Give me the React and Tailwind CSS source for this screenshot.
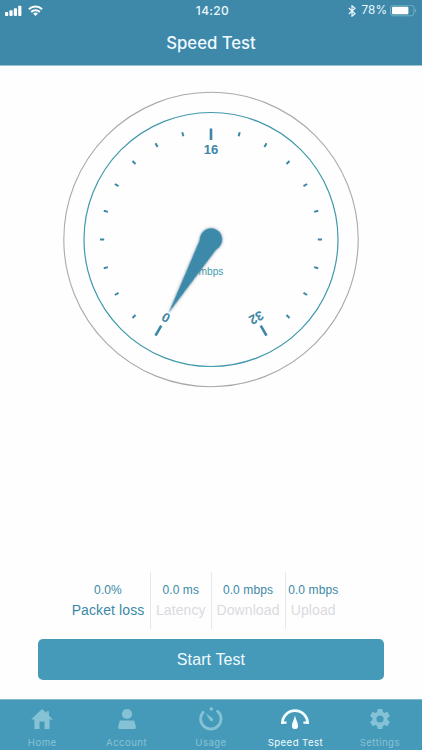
const TICKS = Array.from({ length: 21 }, (_, i) => -150 + i * 15);
const LABELS = { '-150': '0', 0: '16', 150: '32' };

const STATS = [
  { value: '0.0%', label: 'Packet loss', active: true, width: 'w-[85px]' },
  { value: '0.0 ms', label: 'Latency', width: 'w-[60.5px]' },
  { value: '0.0 mbps', label: 'Download', width: 'w-[74px]' },
  { value: '0.0 mbps', label: 'Upload', width: 'w-[55.5px]' },
];

function SignalIcon() {
  return (
    <svg className="h-[12px] w-[17px]" viewBox="0 0 17 12" fill="#fff">
      <rect x="0" y="7" width="3.2" height="4" rx=".9" />
      <rect x="4.4" y="5.3" width="3.2" height="5.7" rx=".9" />
      <rect x="8.8" y="3.2" width="3.2" height="7.8" rx=".9" />
      <rect x="13.2" y=".7" width="3.2" height="10.3" rx=".9" />
    </svg>
  );
}

function WifiIcon() {
  return (
    <svg className="h-[12px] w-[15px]" viewBox="0 0 15 12" fill="none" stroke="#fff" strokeWidth="2.1">
      <path d="M.9 4.2a9.4 9.4 0 0 1 13.2 0" />
      <path d="M3.2 7a6 6 0 0 1 8.6 0" />
      <path d="M5.1 8.6a3.4 3.4 0 0 1 4.8 0L7.5 11.1Z" fill="#fff" stroke="none" />
    </svg>
  );
}

function BluetoothIcon() {
  return (
    <svg className="h-[12px] w-[8px]" viewBox="0 0 8 12" fill="none" stroke="#eaf8fc" strokeWidth="1.2">
      <path d="M.8 3 7 8.7 4 11.2V.8l3 2.5L.8 9" />
    </svg>
  );
}

function BatteryIcon() {
  return (
    <svg className="h-[12px] w-[27px]" viewBox="0 0 27 12">
      <rect x=".5" y=".2" width="23.4" height="10.6" rx="2.6" fill="none" stroke="#70b0c5" />
      <rect x="2" y="1.7" width="16.4" height="7.6" rx="1" fill="#fff" />
      <path d="M25 3.7c1.6.5 1.6 3.1 0 3.6Z" fill="#70b0c5" />
    </svg>
  );
}

function StatusBar() {
  return (
    <div className="grid h-[21px] grid-cols-3 items-center pl-[5px] pr-[5px] text-[#eaf8fc]">
      <div className="flex items-center gap-[6px]">
        <SignalIcon />
        <WifiIcon />
      </div>
      <div className="pl-[3px] text-center text-[12px] font-medium tracking-[0.35px]">14:20</div>
      <div className="flex items-center justify-end">
        <BluetoothIcon />
        <span className="ml-[6px] mr-[3px] text-[11.8px]">78%</span>
        <BatteryIcon />
      </div>
    </div>
  );
}

function Gauge() {
  return (
    <svg className="h-[300px] w-[300px]" viewBox="-150 -150.5 300 300">
      <defs>
        <filter id="needle-shadow" x="-30%" y="-30%" width="160%" height="160%">
          <feDropShadow dx="0" dy="0" stdDeviation="1.5" floodColor="#000" floodOpacity=".4" />
        </filter>
      </defs>
      <circle r="147.2" fill="none" stroke="#aaaaaa" strokeWidth="1.1" />
      <circle r="127" fill="none" stroke="#3f9aaa" strokeWidth="1.2" />
      {TICKS.map((angle) => {
        const label = LABELS[angle];
        return (
          <g key={angle} transform={`rotate(${angle})`}>
            <line
              y1="-111"
              y2={label ? -99.5 : -106.8}
              stroke="#3c87a7"
              strokeWidth={label ? 2.6 : 2}
            />
            {label && (
              <text
                y="-85.8"
                textAnchor="middle"
                fill="#3c87a7"
                className="font-['Liberation_Sans',sans-serif] text-[13px] font-bold"
              >
                {label}
              </text>
            )}
          </g>
        );
      })}
      <text
        y="35"
        textAnchor="middle"
        fill="#3f9aaa"
        className="font-['Liberation_Sans',sans-serif] text-[10.2px]"
      >
        mbps
      </text>
      <g transform="rotate(-150)" fill="#3e89aa" filter="url(#needle-shadow)">
        <path d="M-9.7-5 0-85 9.7-5Z" />
        <circle r="11.2" />
      </g>
    </svg>
  );
}

function Stat({ value, label, active, width }) {
  return (
    <div
      className={`flex h-[57px] flex-col items-center whitespace-nowrap border-r border-[#e8e8eb] pt-[10px] last:border-r-0 ${width}`}
    >
      <span className="text-[12px] leading-[16px] tracking-[0.1px] text-[#3b89a6]">{value}</span>
      <span
        className={`mt-[3px] text-[14px] leading-[18px] tracking-[0.1px] ${active ? 'text-[#3b89a6]' : 'text-[#dadade]'}`}
      >
        {label}
      </span>
    </div>
  );
}

function HomeIcon() {
  return (
    <svg className="h-[24px] w-[24px]" viewBox="0 0 24 24" fill="currentColor">
      <path d="M12 2 1.6 12q-.3.6.4.6h2.4v8.7q0 .7.7.7h4.4v-7.5h5V22h4.4q.7 0 .7-.7v-8.7H22q.7 0 .4-.6l-3.5-3.4V4.2h-2.6V6Z" />
    </svg>
  );
}

function AccountIcon() {
  return (
    <svg className="h-[24px] w-[24px]" viewBox="0 0 24 24" fill="currentColor">
      <circle cx="12" cy="7" r="5.1" />
      <path d="M5.8 13.5h12.4q1 0 1.3 1l1.4 5.6q.3 1.9-1.5 1.9H4.6q-1.8 0-1.5-1.9l1.4-5.6q.3-1 1.3-1Z" />
    </svg>
  );
}

function UsageIcon() {
  return (
    <svg className="h-[24px] w-[24px]" viewBox="0 0 24 24" fill="none" stroke="currentColor">
      <path d="M18.6 4.2A10.2 10.2 0 1 1 4 5.3" strokeWidth="2.8" strokeLinecap="round" />
      <circle cx="12.3" cy="2" r="1.8" fill="currentColor" stroke="none" />
      <path d="m6.6 6 6.8 5.2q1.4 1.4.3 2.5t-2.6-.2Z" fill="currentColor" stroke="none" />
    </svg>
  );
}

function SpeedIcon() {
  return (
    <svg className="h-[24px] w-[30px]" viewBox="0 0 30 24" fill="none" stroke="currentColor">
      <path d="M2.5 17v-1.2a12.5 12.1 0 0 1 25 0V17" strokeWidth="2.7" />
      <path d="M1.2 15.7h5.4M23.4 15.7h5.4" strokeWidth="2.2" />
      <path d="M15 8.5c.7 3.8 3.1 7.4 3.1 10.4a3.1 3.1 0 0 1-6.2 0c0-3 2.4-6.6 3.1-10.4Z" fill="currentColor" stroke="none" />
    </svg>
  );
}

function SettingsIcon() {
  return (
    <svg className="h-[24px] w-[24px]" viewBox="0 0 24 24" fill="currentColor">
      <path d="M19.4 13c.1-.6.1-1.4 0-2l2.1-1.6c.2-.2.3-.4.1-.7l-2-3.4c-.1-.2-.4-.3-.6-.2l-2.5 1c-.5-.4-1.1-.7-1.7-1l-.4-2.6c0-.3-.2-.5-.5-.5h-4c-.2 0-.4.2-.4.5l-.4 2.6c-.6.3-1.2.6-1.7 1l-2.5-1c-.2-.1-.5 0-.6.2l-2 3.4c-.1.3-.1.5.1.7L4.6 11c-.1.6-.1 1.4 0 2l-2.2 1.6c-.2.2-.2.4-.1.7l2 3.4c.1.2.4.3.6.2l2.5-1c.5.4 1.1.7 1.7 1l.4 2.6c0 .3.2.5.4.5h4c.3 0 .5-.2.5-.5l.4-2.6c.6-.3 1.2-.6 1.7-1l2.5 1c.2.1.5 0 .6-.2l2-3.4c.2-.3.1-.5-.1-.7ZM12 15.6a3.6 3.6 0 1 1 0-7.2 3.6 3.6 0 0 1 0 7.2Z" fillRule="evenodd" />
    </svg>
  );
}

const TABS = [
  { label: 'Home', Icon: HomeIcon },
  { label: 'Account', Icon: AccountIcon },
  { label: 'Usage', Icon: UsageIcon },
  { label: 'Speed Test', Icon: SpeedIcon, active: true },
  { label: 'Settings', Icon: SettingsIcon },
];

function TabBar() {
  return (
    <nav className="grid h-[51px] grid-cols-5 border-t border-[#84b9ca] bg-[#469ab9]">
      {TABS.map(({ label, Icon, active }) => (
        <button
          key={label}
          type="button"
          className={`flex flex-col items-center pt-[7px] ${active ? 'text-[#f4fdff]' : 'text-[#86c2d5]'}`}
        >
          <Icon />
          <span className="mt-[6px] whitespace-nowrap text-[9.6px] leading-[12px] tracking-[0.45px]">
            {label}
          </span>
        </button>
      ))}
    </nav>
  );
}

export default function App() {
  return (
    <div className="flex h-[750px] w-[422px] flex-col overflow-hidden bg-white font-['Inter',sans-serif]">
      <header className="h-[66px] border-b border-[#9dc3d3] bg-[#3e88aa]">
        <StatusBar />
        <h1 className="text-center text-[16.7px] font-medium leading-[44px] text-[#eefaff]">
          Speed Test
        </h1>
      </header>

      <main className="flex flex-1 flex-col items-center bg-[#fefefe] pt-[23px] font-['Liberation_Sans',sans-serif]">
        <Gauge />
        <div className="mt-auto flex w-[290px]">
          {STATS.map((stat) => (
            <Stat key={stat.label} {...stat} />
          ))}
        </div>
        <button
          type="button"
          className="mb-[19px] mt-[10px] h-[41px] w-[346px] rounded-[5px] bg-[#469ab9] text-[16px] tracking-[0.1px] text-[#effbff]"
        >
          Start Test
        </button>
      </main>

      <TabBar />
    </div>
  );
}
